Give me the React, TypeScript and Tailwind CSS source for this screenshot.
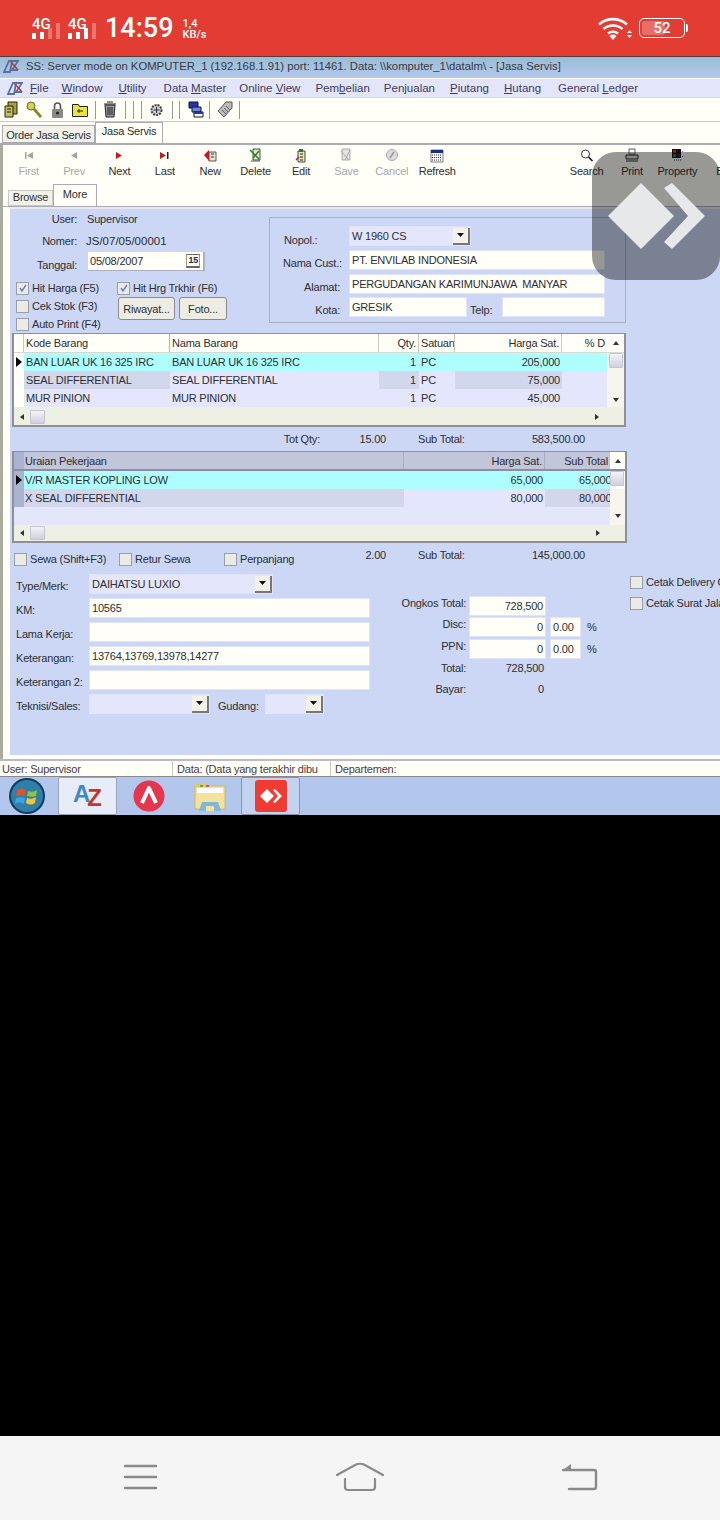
import type { ReactNode } from 'react'

const MENU: [string, string, string, string][] = [
  ['', 'F', 'ile', 'ml-[7px]'],
  ['', 'W', 'indow', 'ml-[13px]'],
  ['', 'U', 'tility', 'ml-[16px]'],
  ['Data ', 'M', 'aster', 'ml-[17px]'],
  ['Online ', 'V', 'iew', 'ml-[13px]'],
  ['Pem', 'b', 'elian', 'ml-[15px]'],
  ['Pen', 'j', 'ualan', 'ml-[14px]'],
  ['', 'P', 'iutang', 'ml-[15px]'],
  ['', 'H', 'utang', 'ml-[15px]'],
  ['General ', 'L', 'edger', 'ml-[17px]'],
]

const Check = ({ checked, label, className = '' }: { checked?: boolean; label: string; className?: string }) => (
  <div className={`flex items-center gap-[3px] ${className}`}>
    <span className="w-[13px] h-[13px] shrink-0 border border-[#9a9ea8] bg-[#ebebe6] flex items-center justify-center">
      {checked && (
        <svg width="10" height="10" viewBox="0 0 10 10">
          <path d="M2 5l2 3 4-6" fill="none" stroke="#5f7fc0" strokeWidth="1.4" />
        </svg>
      )}
    </span>
    <span className="whitespace-nowrap">{label}</span>
  </div>
)

const Field = ({ value = '', className = '', right }: { value?: string; className?: string; right?: boolean }) => (
  <div
    className={`h-[20px] bg-[#fffff8] border border-[#dfe5f6] flex items-center px-[2px] whitespace-pre overflow-hidden ${right ? 'justify-end' : ''} ${className}`}
  >
    {value}
  </div>
)

const Combo = ({ value = '', className = '' }: { value?: string; className?: string }) => (
  <div className={`h-[20px] bg-[#e4e7fc] border border-[#dfe5f6] flex items-center justify-between pl-[2px] ${className}`}>
    <span className="whitespace-nowrap">{value}</span>
    <span className="w-[17px] h-[17px] bg-[#f2f2ea] border-r-2 border-b-2 border-[#777] flex items-center justify-center">
      <svg width="7" height="4" viewBox="0 0 7 4">
        <path d="M0 0h7L3.5 4z" fill="#111" />
      </svg>
    </span>
  </div>
)

const Arrow = ({ dir, className = '' }: { dir: 'l' | 'r' | 'u' | 'd'; className?: string }) => {
  const d = { l: 'M5 0v6L1 3z', r: 'M1 0v6l4-3z', u: 'M0 5h6L3 1z', d: 'M0 1h6L3 5z' }[dir]
  return (
    <svg width="6" height="6" viewBox="0 0 6 6" className={className}>
      <path d={d} fill="#333" />
    </svg>
  )
}

const Thumb = ({ className = '' }: { className?: string }) => (
  <span className={`block bg-gradient-to-b from-[#f4f4fa] to-[#cfcfe0] border border-[#c5c6d2] rounded-[1px] ${className}`} />
)

const Sep = ({ className = '' }: { className?: string }) => <span className={`w-px h-[18px] bg-[#9a9a94] shrink-0 ${className}`} />

type NavBtn = { label: string; off?: boolean; icon: ReactNode }

const I = ({ children }: { children: ReactNode }) => (
  <svg width="16" height="16" viewBox="0 0 16 16">
    {children}
  </svg>
)

const NAV: NavBtn[] = [
  { label: 'First', off: true, icon: <I><path d="M4 4h1.5v7H4zM12 4v7L6 7.5z" fill="#a3a3a3" /></I> },
  { label: 'Prev', off: true, icon: <I><path d="M11 4v7L5 7.5z" fill="#a3a3a3" /></I> },
  { label: 'Next', icon: <I><path d="M5 4v7l6-3.500z" fill="#c81a1a" /></I> },
  { label: 'Last', icon: <I><path d="M3 4v7l6-3.500z" fill="#c81a1a" /><path d="M10 4h1.500v7H10z" fill="#222" /></I> },
  { label: 'New', icon: <I><path d="M7 4h7v9H7z" fill="#e9e6d6" stroke="#333" strokeWidth=".8" /><path d="M2 7l5-5v11z" fill="#c81a1a" /><path d="M9 6h3M9 9h3" stroke="#333" /></I> },
  { label: 'Delete', icon: <I><path d="M5 1h7v11H5z" fill="#e8e6b8" stroke="#222" strokeWidth=".8" /><path d="M2 2l9 9M11 3L5 10" stroke="#1f7a33" strokeWidth="1.400" /><path d="M3 13h9" stroke="#555" /></I> },
  { label: 'Edit', icon: <I><path d="M5 3h7v11H5z" fill="#e8e6b8" stroke="#222" strokeWidth=".8" /><path d="M7 6h3M7 9h3M7 12h3" stroke="#222" /><path d="M6 1h4v3H6z" fill="#2f7a3a" /><path d="M3 12l3-3" stroke="#b23" strokeWidth="1.500" /></I> },
  { label: 'Save', off: true, icon: <I><path d="M4 1h8v11H4z" fill="#e4e4dc" stroke="#999" strokeWidth=".8" /><path d="M3 3l8 9M12 2L7 12" stroke="#aaa" /></I> },
  { label: 'Cancel', off: true, icon: <I><circle cx="8" cy="7" r="5.500" fill="#ddd" stroke="#aaa" /><path d="M6 10l4-6" stroke="#999" strokeWidth="1.500" /></I> },
  { label: 'Refresh', icon: <I><path d="M2 2h12v12H2z" fill="#fff" stroke="#223" strokeWidth=".6" /><path d="M2 2h12v3H2z" fill="#1b2a8a" /><path d="M3 7h10M3 9.500h10M3 12h10" stroke="#223" strokeDasharray="1 1" /></I> },
]

const NAV_RIGHT: NavBtn[] = [
  { label: 'Search', icon: <I><circle cx="6.500" cy="6" r="4" fill="#fff" stroke="#333" /><path d="M9.500 9l4 4" stroke="#111" strokeWidth="1.600" /></I> },
  { label: 'Print', icon: <I><path d="M5 1h6v5H5z" fill="#fff" stroke="#333" strokeWidth=".8" /><path d="M2 7h12v4H2z" fill="#ddd" stroke="#222" /><path d="M2 13h12" stroke="#222" /></I> },
  { label: 'Property', icon: <I><path d="M3 1h9v9H3z" fill="#111" /><path d="M4 2h3v3H4z" fill="#b11" /><path d="M8 6h3v3H8z" fill="#12b" /><path d="M4 6h3v3H4z" fill="#183" /><path d="M13 3l1 1M13 8l1 1M5 12h7" stroke="#333" strokeDasharray="1 1" /></I> },
  { label: 'Ba', icon: <I><path d="M3 3h10v10H3z" fill="none" /></I> },
]

const GRID1 = [
  ['BAN LUAR UK 16 325 IRC', 'BAN LUAR UK 16 325 IRC', '1', 'PC', '205,000'],
  ['SEAL DIFFERENTIAL', 'SEAL DIFFERENTIAL', '1', 'PC', '75,000'],
  ['MUR PINION', 'MUR PINION', '1', 'PC', '45,000'],
]

const Pointer = () => (
  <svg width="7" height="10" viewBox="0 0 7 10" className="ml-[2px]">
    <path d="M0 0l6 5-6 5z" fill="#000" />
  </svg>
)

function Signal({ bright }: { bright: number }) {
  const heights = ['h-[6px]', 'h-[7px]', 'h-[11px]', 'h-[16px]']
  return (
    <div className="flex items-end gap-[4px] h-[16px] mt-[-9px]">
      {heights.map((h, i) => (
        <span key={h} className={`w-[4px] ${h} ${i < bright ? 'bg-white' : 'bg-white/30'}`} />
      ))}
    </div>
  )
}

function StatusBar() {
  return (
    <div className="h-[57px] bg-[#e33c33] border-b border-[#5a3a38] flex items-center text-white font-['Roboto',sans-serif] shrink-0">
      <div className="ml-[32px] flex flex-col w-[36px]">
        <span className="text-[15px] leading-[15px] font-medium">4G</span>
        <Signal bright={2} />
      </div>
      <div className="flex flex-col w-[37px]">
        <span className="text-[15px] leading-[15px] font-medium">4G</span>
        <Signal bright={3} />
      </div>
      <span className="text-[27px] leading-[30px] font-medium">14:59</span>
      <div className="ml-[9px] flex flex-col text-[11px] leading-[11px] font-medium mt-[1px]">
        <span>1,4</span>
        <span>KB/s</span>
      </div>
      <svg width="34" height="24" viewBox="0 0 34 24" className="ml-auto">
        <path d="M1 8.500a21 21 0 0 1 28 0M5.500 13a14.500 14.500 0 0 1 19 0M10 17.500a8 8 0 0 1 10 0" fill="none" stroke="#fff" strokeWidth="2.600" />
        <path d="M15 24l-3.500-4a5 5 0 0 1 7 0z" fill="#fff" />
        <path d="M29 17h5l-2.500-3zM29 19h5l-2.500 3z" fill="#fff" />
      </svg>
      <div className="ml-[7px] mr-[32px] flex items-center">
        <div className="relative w-[46px] h-[20px] border border-white rounded-[5px] overflow-hidden flex items-center justify-center">
          <span className="absolute left-[2px] top-[2px] bottom-[2px] w-[23px] bg-white/25 rounded-[2px]" />
          <span className="relative text-[15px] font-medium">52</span>
        </div>
        <span className="w-[2px] h-[8px] bg-white ml-px rounded-r-sm" />
      </div>
    </div>
  )
}

function Grid1() {
  return (
    <div className="ml-[2px] w-[614px] h-[94px] border-2 border-[#8d9096] border-t-[1px] bg-[#eef0e4] flex flex-col overflow-hidden shrink-0">
      <div className="flex h-[19px] bg-[#fffff8] border-b border-[#d8d8d0] shrink-0">
        <span className="w-[10px] border-r border-[#c9c9c2]" />
        <span className="w-[146px] pl-[2px] border-r border-[#b8b8b0]">Kode Barang</span>
        <span className="w-[209px] pl-[2px] border-r border-[#c9c9c2]">Nama Barang</span>
        <span className="w-[40px] text-right pr-[2px] border-r border-[#c9c9c2]">Qty.</span>
        <span className="w-[36px] pl-[2px] border-r border-[#c9c9c2] overflow-hidden">Satuan</span>
        <span className="w-[107px] text-right pr-[2px] border-r border-[#c9c9c2]">Harga Sat.</span>
        <span className="w-[45px] text-right pr-[2px]">% D</span>
        <span className="w-[17px] flex justify-center items-center"><Arrow dir="u" /></span>
      </div>
      {GRID1.map((r, i) => (
        <div key={r[0]} className={`flex h-[18px] shrink-0 ${i === 0 ? 'bg-[#aefeff]' : 'bg-[#e3e6fc]'}`}>
          <span className="w-[10px] flex items-center bg-[#fffff8]">{i === 0 && <Pointer />}</span>
          <span className={`w-[146px] pl-[2px] whitespace-nowrap ${i === 1 ? 'bg-[#d3d7ec]' : ''}`}>{r[0]}</span>
          <span className="w-[209px] pl-[2px] whitespace-nowrap">{r[1]}</span>
          <span className={`w-[40px] text-right pr-[3px] ${i === 1 ? 'bg-[#d3d7ec]' : ''}`}>{r[2]}</span>
          <span className="w-[36px] pl-[2px]">{r[3]}</span>
          <span className={`w-[107px] text-right pr-[2px] ${i === 1 ? 'bg-[#d3d7ec]' : ''}`}>{r[4]}</span>
          <span className="w-[45px]" />
          <span className="w-[17px] bg-[#f6f6ee] flex flex-col items-center">
            {i === 0 && <Thumb className="w-[14px] h-[15px]" />}
            {i === 2 && <Arrow dir="d" className="mt-[8px]" />}
          </span>
        </div>
      ))}
      <div className="flex flex-1 items-center pt-px">
        <Arrow dir="l" className="ml-[5px]" />
        <Thumb className="ml-[5px] w-[15px] h-[14px]" />
        <Arrow dir="r" className="ml-[549px]" />
      </div>
    </div>
  )
}

function Grid2() {
  return (
    <div className="ml-[2px] mt-[6px] w-[615px] h-[92px] border-2 border-[#8d9096] border-t-[1px] bg-[#eef0e4] flex flex-col overflow-hidden shrink-0">
      <div className="flex h-[19px] bg-[#c2c6da] border-b-2 border-[#8a8ea2] shrink-0">
        <span className="w-[10px] bg-[#aab4d0]" />
        <span className="w-[380px] pl-[1px] border-r border-[#a9adbf]">Uraian Pekerjaan</span>
        <span className="w-[141px] text-right pr-[2px] border-r border-[#a9adbf]">Harga Sat.</span>
        <span className="w-[65px] text-right pr-[2px] whitespace-nowrap">Sub Total</span>
        <span className="w-[15px] bg-[#fffff8] flex justify-center items-center"><Arrow dir="u" /></span>
      </div>
      <div className="flex h-[18px] bg-[#aefeff] shrink-0">
        <span className="w-[10px] flex items-center bg-[#aab4d0]"><Pointer /></span>
        <span className="w-[380px] pl-[1px]">V/R MASTER KOPLING LOW</span>
        <span className="w-[141px] text-right pr-[2px]">65,000</span>
        <span className="w-[65px] overflow-hidden whitespace-nowrap pl-[34px]">65,000</span>
        <span className="w-[15px] bg-[#fffff8]"><Thumb className="w-[14px] h-[15px]" /></span>
      </div>
      <div className="flex h-[18px] bg-[#e3e6fc] shrink-0">
        <span className="w-[10px] bg-[#aab4d0]" />
        <span className="w-[380px] pl-[1px] bg-[#d3d7ec]">X SEAL DIFFERENTIAL</span>
        <span className="w-[141px] text-right pr-[2px]">80,000</span>
        <span className="w-[65px] overflow-hidden whitespace-nowrap pl-[34px] bg-[#d3d7ec]">80,000</span>
        <span className="w-[15px] bg-[#f6f6ee]" />
      </div>
      <div className="flex h-[18px] bg-[#e3e6fc] shrink-0">
        <span className="flex-1" />
        <span className="w-[15px] bg-[#f6f6ee] flex justify-center items-center"><Arrow dir="d" /></span>
      </div>
      <div className="flex flex-1 items-center">
        <Arrow dir="l" className="ml-[5px]" />
        <Thumb className="ml-[5px] w-[15px] h-[14px]" />
        <Arrow dir="r" className="ml-[550px]" />
      </div>
    </div>
  )
}

function FormRow({ label, children, className = '' }: { label: string; children: ReactNode; className?: string }) {
  return (
    <div className={`flex items-center ${className}`}>
      <span className="w-[73px] shrink-0 whitespace-nowrap translate-y-[2px]">{label}</span>
      {children}
    </div>
  )
}

function Desktop() {
  return (
    <div className="h-[719px] flex flex-col bg-[#fffff8] overflow-hidden text-[#2e2e33] text-[11px] tracking-[-0.2px] leading-[18px] font-['Liberation_Sans',sans-serif] shrink-0">
      {/* title + menu */}
      <div className="h-[21px] bg-gradient-to-b from-[#98bdd6] to-[#b4c8ec] flex items-center pl-[3px] pb-[3px] text-[#35393f] text-[11.300px] tracking-normal shrink-0">
        <svg width="16" height="14" viewBox="0 0 16 14">
          <path d="M1 13L6 2h3l-2 11zM8 2h7l-6 9h6" fill="none" stroke="#5c6f9c" strokeWidth="1.800" />
          <path d="M8 3l7 8" stroke="#c03535" strokeWidth="1.500" />
        </svg>
        <span className="ml-[7px] whitespace-nowrap">{'SS: Server mode on KOMPUTER_1 (192.168.1.91) port: 11461. Data: \\\\komputer_1\\datalm\\ - [Jasa Servis]'}</span>
      </div>
      <div className="h-[20px] bg-[#e3e6fb] border-t border-white border-b border-b-[#d8d8d0] flex items-center pl-[7px] pb-px text-[#3d3a5c] text-[11.500px] tracking-normal shrink-0">
        <svg width="16" height="14" viewBox="0 0 16 14">
          <path d="M1 13L6 2h3l-2 11zM8 2h7l-6 9h6" fill="none" stroke="#5c6f9c" strokeWidth="1.800" />
          <path d="M8 3l7 8" stroke="#c03535" strokeWidth="1.500" />
        </svg>
        {MENU.map(([a, u, b, cls]) => (
          <span key={u + b} className={`${cls} whitespace-nowrap`}>
            {a}
            <u>{u}</u>
            {b}
          </span>
        ))}
      </div>
      {/* toolbar */}
      <div className="h-[24px] flex items-center pl-[4px] border-b border-[#c9c9c2] shrink-0">
        <svg width="14" height="17" viewBox="0 0 14 17"><path d="M4 1h9v12H4z" fill="#a8a23c" stroke="#222" /><path d="M1 5h8v11H1z" fill="#c5bf55" stroke="#222" /><path d="M3 8h4M3 11h4" stroke="#222" /></svg>
        <svg width="16" height="17" viewBox="0 0 16 17" className="ml-[8px]"><circle cx="5" cy="5" r="4" fill="#d9cf4a" stroke="#665" /><path d="M8 8l7 8" stroke="#8a8420" strokeWidth="2.800" /></svg>
        <svg width="13" height="16" viewBox="0 0 13 16" className="ml-[9px]"><path d="M3.500 7V4a3 3 0 0 1 6 0v3" fill="none" stroke="#555" strokeWidth="1.600" /><rect x="1" y="7" width="11" height="9" rx="1" fill="#888" /><circle cx="6.500" cy="11" r="1.500" fill="#222" /></svg>
        <svg width="16" height="15" viewBox="0 0 16 15" className="ml-[8px]"><path d="M.5 2.500h6l1 2h8v10H.500z" fill="#ece33c" stroke="#222" /><path d="M5 9h6M7 7v4" stroke="#222" /></svg>
        <Sep className="ml-[7px]" />
        <svg width="16" height="17" viewBox="0 0 16 17" className="ml-[6px]"><path d="M3 4h10l-1 12H4z" fill="#999" stroke="#222" /><path d="M2 3h12M5 1h6M6 6v8M10 6v8M8 6v8" stroke="#222" /></svg>
        <Sep className="ml-[7px]" />
        <Sep className="ml-[7px]" />
        <Sep className="ml-[7px]" />
        <svg width="15" height="16" viewBox="0 0 15 16" className="ml-[7px]"><circle cx="7.500" cy="8" r="5" fill="#ccc" stroke="#444" strokeWidth="2" strokeDasharray="2 1" /><path d="M7.500 5v6M4.500 8h6" stroke="#333" /></svg>
        <Sep className="ml-[8px]" />
        <Sep className="ml-[6px]" />
        <svg width="16" height="17" viewBox="0 0 16 17" className="ml-[8px]"><path d="M1 1h9v6H1z" fill="#2437b0" stroke="#113" /><path d="M4 6h9v5H4z" fill="#6d86d8" stroke="#113" /><path d="M6 11h9v5H6z" fill="#fff" stroke="#113" /><path d="M6 11h9v2H6z" fill="#2437b0" /></svg>
        <Sep className="ml-[5px]" />
        <svg width="16" height="17" viewBox="0 0 16 17" className="ml-[7px]"><path d="M1 10l8-9h6v6l-8 9z" fill="#bbb" stroke="#555" /><path d="M5 9l4 4M7 7l4 4M9 5l4 4" stroke="#666" /></svg>
        <Sep className="ml-[6px]" />
      </div>
      {/* mdi tabs */}
      <div className="h-[23px] flex items-end pl-[2px] border-b-2 border-[#a9abb0] shrink-0">
        <span className="h-[18px] w-[93px] bg-[#f2f2ea] border border-[#a9abb0] text-center leading-[18px] whitespace-nowrap">Order Jasa Servis</span>
        <span className="h-[21px] w-[68px] bg-[#fffff8] border border-b-0 border-[#a9abb0] text-center leading-[17px]">Jasa Servis</span>
      </div>
      <div className="flex-1 flex min-h-0">
        <div className="w-[3px] bg-[#a9ab9f] shrink-0" />
        <div className="flex-1 min-w-0 flex flex-col">
          {/* nav buttons */}
          <div className="h-[38px] flex pl-[3px] pt-[3px] shrink-0">
            {NAV.map(b => (
              <div key={b.label} className={`w-[45.400px] shrink-0 flex flex-col items-center ${b.off ? 'text-[#a8a8a8]' : ''}`}>
                {b.icon}
                <span className="leading-[14px]">{b.label}</span>
              </div>
            ))}
            <div className="w-[104px] shrink-0" />
            {NAV_RIGHT.map(b => (
              <div key={b.label} className="w-[45.400px] shrink-0 flex flex-col items-center">
                {b.icon}
                <span className="leading-[14px]">{b.label}</span>
              </div>
            ))}
          </div>
          {/* inner tabs */}
          <div className="h-[24px] flex items-end pl-[5px] border-b border-[#a9abb0] shrink-0">
            <span className="h-[16px] w-[45px] border border-[#c9c9c2] bg-[#f2f2ea] text-center leading-[12px]">Browse</span>
            <span className="h-[22px] w-[44px] border border-b-0 border-[#a9abb0] text-center leading-[18px]">More</span>
          </div>
          {/* form panel */}
          <div className="h-[548px] ml-[5px] bg-[#cbd7f4] border-t-2 border-[#e7e9f0] border-l-2 border-l-white flex flex-col overflow-hidden">
            <div className="flex h-[124px] shrink-0">
              <div className="w-[259px] shrink-0 flex flex-col">
                <div className="flex mt-px h-[18px]">
                  <span className="w-[67px] text-right">User:</span>
                  <span className="ml-[10px]">Supervisor</span>
                </div>
                <div className="flex mt-[4px] h-[18px]">
                  <span className="w-[67px] text-right">Nomer:</span>
                  <span className="ml-[9px] text-[11.500px] tracking-normal">JS/07/05/00001</span>
                </div>
                <div className="flex items-center h-[19px] mt-[2px]">
                  <span className="w-[67px] text-right translate-y-[3px]">Tanggal:</span>
                  <div className="ml-[11px] w-[117px] h-[19px] bg-[#fffff8] flex items-center justify-between pl-[2px] border-r-2 border-b border-[#aab0bf]">
                    05/08/2007
                    <span className="mr-[3px] text-[9px] leading-[11px] font-bold border-b-2 border-[#666] border-t border-x border-t-[#666] border-x-[#999] px-px">15</span>
                  </div>
                </div>
                <div className="flex mt-[8px] h-[18px] pl-[6px]">
                  <Check checked label="Hit Harga (F5)" className="w-[101px]" />
                  <Check checked label="Hit Hrg Trkhir (F6)" />
                </div>
                <div className="flex h-[24px]">
                  <div className="pl-[6px] w-[108px] flex flex-col">
                    <Check label="Cek Stok (F3)" />
                    <Check label="Auto Print (F4)" />
                  </div>
                  <button className="w-[57px] h-[23px] bg-[#ededE4] border border-[#8a8a8a] rounded-[3px] text-center">Riwayat...</button>
                  <button className="ml-[4px] w-[48px] h-[23px] bg-[#ededE4] border border-[#8a8a8a] rounded-[3px] text-center">Foto...</button>
                </div>
              </div>
              <div className="mt-[8px] w-[357px] h-[106px] border border-[#a8aec0] flex flex-col pt-[8px]">
                <div className="flex items-center pl-[14px]">
                  <span className="w-[65px] translate-y-[4px]">Nopol.:</span>
                  <Combo value="W 1960 CS" className="w-[122px]" />
                </div>
                <div className="flex items-center mt-[4px] pl-[13px]">
                  <span className="w-[57px] whitespace-nowrap text-right translate-y-[3px]">Nama Cust.:</span>
                  <Field value="PT. ENVILAB INDONESIA" className="ml-[9px] w-[256px]" />
                </div>
                <div className="flex items-center mt-[4px] pl-[13px]">
                  <span className="w-[57px] text-right translate-y-[3px]">Alamat:</span>
                  <Field value="PERGUDANGAN KARIMUNJAWA  MANYAR" className="ml-[9px] w-[256px]" />
                </div>
                <div className="flex items-center mt-[3px] pl-[13px]">
                  <span className="w-[57px] text-right translate-y-[3px]">Kota:</span>
                  <Field value="GRESIK" className="ml-[9px] w-[118px]" />
                  <span className="ml-[3px] w-[32px] translate-y-[3px]">Telp:</span>
                  <Field className="w-[103px]" />
                </div>
              </div>
            </div>
            <Grid1 />
            <div className="flex h-[15px] mt-[3px] shrink-0 whitespace-nowrap">
              <span className="ml-[273px] w-[37px] text-right">Tot Qty:</span>
              <span className="ml-[39px] w-[27px] text-right">15.00</span>
              <span className="ml-[32px] w-[48px]">Sub Total:</span>
              <span className="w-[119px] text-right">583,500.00</span>
            </div>
            <Grid2 />
            <div className="flex h-[22px] mt-[3px] shrink-0 pl-[4px] whitespace-nowrap">
              <Check label="Sewa (Shift+F3)" className="w-[105px] h-[18px] mt-[4px]" />
              <Check label="Retur Sewa" className="w-[105px] h-[18px] mt-[4px]" />
              <Check label="Perpanjang" className="w-[132px] h-[18px] mt-[4px]" />
              <span className="w-[30px] text-right">2.00</span>
              <span className="ml-[32px] w-[48px]">Sub Total:</span>
              <span className="w-[119px] text-right">145,000.00</span>
            </div>
            <div className="flex mt-[6px]">
              <div className="w-[370px] shrink-0 pl-[6px] flex flex-col gap-[4px]">
                <FormRow label="Type/Merk:"><Combo value="DAIHATSU LUXIO" className="w-[184px]" /></FormRow>
                <FormRow label="KM:"><Field value="10565" className="w-[281px]" /></FormRow>
                <FormRow label="Lama Kerja:"><Field className="w-[281px]" /></FormRow>
                <FormRow label="Keterangan:"><Field value="13764,13769,13978,14277" className="w-[281px]" /></FormRow>
                <FormRow label="Keterangan 2:"><Field className="w-[281px]" /></FormRow>
                <FormRow label="Teknisi/Sales:">
                  <Combo className="w-[121px]" />
                  <span className="ml-[8px] w-[47px] translate-y-[2px]">Gudang:</span>
                  <Combo className="w-[59px]" />
                </FormRow>
              </div>
              <div className="w-[250px] shrink-0 mt-[22px] pl-[9px] flex flex-col">
                <div className="flex items-center">
                  <span className="w-[80px] text-right pr-[3px] -translate-y-[3px] whitespace-nowrap">Ongkos Total:</span>
                  <Field value="728,500" right className="w-[77px]" />
                </div>
                <div className="flex items-center mt-px">
                  <span className="w-[80px] text-right pr-[3px] -translate-y-[3px]">Disc:</span>
                  <Field value="0" right className="w-[77px]" />
                  <Field value="0.00" className="ml-[4px] w-[31px]" />
                  <span className="ml-[6px]">%</span>
                </div>
                <div className="flex items-center mt-[2px]">
                  <span className="w-[80px] text-right pr-[3px] -translate-y-[3px]">PPN:</span>
                  <Field value="0" right className="w-[77px]" />
                  <Field value="0.00" className="ml-[4px] w-[31px]" />
                  <span className="ml-[6px]">%</span>
                </div>
                <div className="flex h-[18px]">
                  <span className="w-[80px] text-right pr-[3px]">Total:</span>
                  <span className="w-[77px] text-right pr-[2px]">728,500</span>
                </div>
                <div className="flex h-[18px] mt-[3px]">
                  <span className="w-[80px] text-right pr-[3px]">Bayar:</span>
                  <span className="w-[77px] text-right pr-[2px]">0</span>
                </div>
              </div>
              <div className="flex flex-col gap-[3px] mt-[-1px]">
                <Check label="Cetak Delivery Order" />
                <Check label="Cetak Surat Jalan" />
              </div>
            </div>
          </div>
        </div>
      </div>
      {/* app status */}
      <div className="h-[17px] flex items-center border-t-2 border-[#b9bcc6] text-[#4a3a4a] shrink-0">
        <span className="w-[173px] pl-[2px] border-r border-[#c9c9c2]">User: Supervisor</span>
        <span className="w-[158px] pl-[4px] border-r border-[#c9c9c2] whitespace-nowrap">Data: (Data yang terakhir dibu</span>
        <span className="pl-[4px]">Departemen:</span>
      </div>
    </div>
  )
}

function Taskbar() {
  return (
    <div className="h-[39px] bg-[#b3c7ec] border-t border-[#888] flex items-center shrink-0">
      <svg width="38" height="38" viewBox="0 0 38 38" className="ml-[8px]">
        <circle cx="19" cy="19" r="18" fill="#123c5e" />
        <circle cx="19" cy="19" r="16" fill="#2f7fa8" />
        <path d="M9 13c3-2 6-2 9 0l-1 6c-3-1-6-1-9 0z" fill="#e2512d" />
        <path d="M20 14c3 1 6 1 9-1l-1 6c-3 1-6 1-9 0z" fill="#8cc63f" />
        <path d="M8 21c3-1 6-1 9 0l-1 6c-3-2-6-2-9 0z" fill="#3aa3e3" />
        <path d="M19 21c3 1 6 1 9-1l-1 6c-3 2-6 2-9 0z" fill="#f7c331" />
      </svg>
      <div className="ml-[12px] w-[59px] h-[38px] bg-[#e6edf8] border border-[#9aa5b8] rounded-[2px] flex items-center justify-center font-['Liberation_Sans',sans-serif] font-bold text-[24px] leading-none">
        <span className="text-[#3f87c9] mt-[-4px]">A</span>
        <span className="text-[#c8352c] mt-[4px] ml-[-3px]">Z</span>
      </div>
      <svg width="32" height="32" viewBox="0 0 32 32" className="ml-[16px]">
        <circle cx="16" cy="16" r="15.500" fill="#e4364f" />
        <path d="M9 23l7-15 7 15" fill="none" stroke="#fff" strokeWidth="4" strokeLinejoin="round" />
      </svg>
      <svg width="32" height="32" viewBox="0 0 32 32" className="ml-[29px]">
        <path d="M1 6h30v23H1z" fill="#f5e29a" stroke="#cdb768" />
        <path d="M1 4h11l2 3H1z" fill="#e3c766" />
        <path d="M3 8h26v5H3z" fill="#fff" />
        <path d="M6 5h3v2H6z" fill="#5caa4a" />
        <path d="M12 5h3v2h-3z" fill="#d65b3a" />
        <path d="M8 22h16l3 9H5z" fill="#7db7df" />
        <path d="M12 26h8v5h-8z" fill="#f5e29a" />
      </svg>
      <div className="ml-[15px] w-[59px] h-[38px] bg-[#c3d3ef] border border-[#8a95ab] rounded-[2px] flex items-center justify-center">
        <div className="w-[32px] h-[32px] rounded-[3px] bg-[#ef3b32] flex items-center justify-center">
          <svg width="22" height="14" viewBox="0 0 22 14">
            <path d="M0 7l7-7 7 7-7 7zM13 1l2-1 7 7-7 7-2-1 5-6z" fill="#fff" />
          </svg>
        </div>
      </div>
    </div>
  )
}

export default function App() {
  return (
    <div className="relative w-[720px] h-[1520px] bg-black overflow-hidden flex flex-col">
      <StatusBar />
      <Desktop />
      <Taskbar />
      <div className="flex-1" />
      {/* android nav */}
      <div className="h-[84px] bg-[#f5f5f5] flex items-center justify-between pl-[124px] pr-[122px] shrink-0">
        <svg width="34" height="26" viewBox="0 0 34 26" className="mt-[-2px]">
          <path d="M1 2h31M1 13h31M1 24h31" stroke="#8a8a8a" strokeWidth="2.400" strokeLinecap="round" />
        </svg>
        <svg width="48" height="30" viewBox="0 0 48 30" className="mt-[-2px]">
          <path d="M1 13L20 2.500q4-1.500 8 0L47 13M9 17v8q0 3 3 3h24q3 0 3-3v-8" fill="none" stroke="#8a8a8a" strokeWidth="2.200" strokeLinecap="round" />
        </svg>
        <svg width="36" height="28" viewBox="0 0 36 28" className="mt-[-2px]">
          <path d="M1 7h31q2 0 2 2v15q0 2-2 2H7" fill="none" stroke="#8a8a8a" strokeWidth="2.400" strokeLinecap="round" />
          <path d="M9 1v6H1z" fill="#8a8a8a" />
        </svg>
      </div>
      {/* floating anydesk button */}
      <div className="absolute left-[592px] top-[152px] w-[128px] h-[128px] rounded-[24px] bg-[rgba(10,10,10,0.42)]">
        <svg width="128" height="128" viewBox="0 0 128 128">
          <path d="M16 64l33-33 33 33-33 33zM72 36l8-5 33 33-33 33-8-7 24-26z" fill="#e6e8ea" />
        </svg>
      </div>
    </div>
  )
}
